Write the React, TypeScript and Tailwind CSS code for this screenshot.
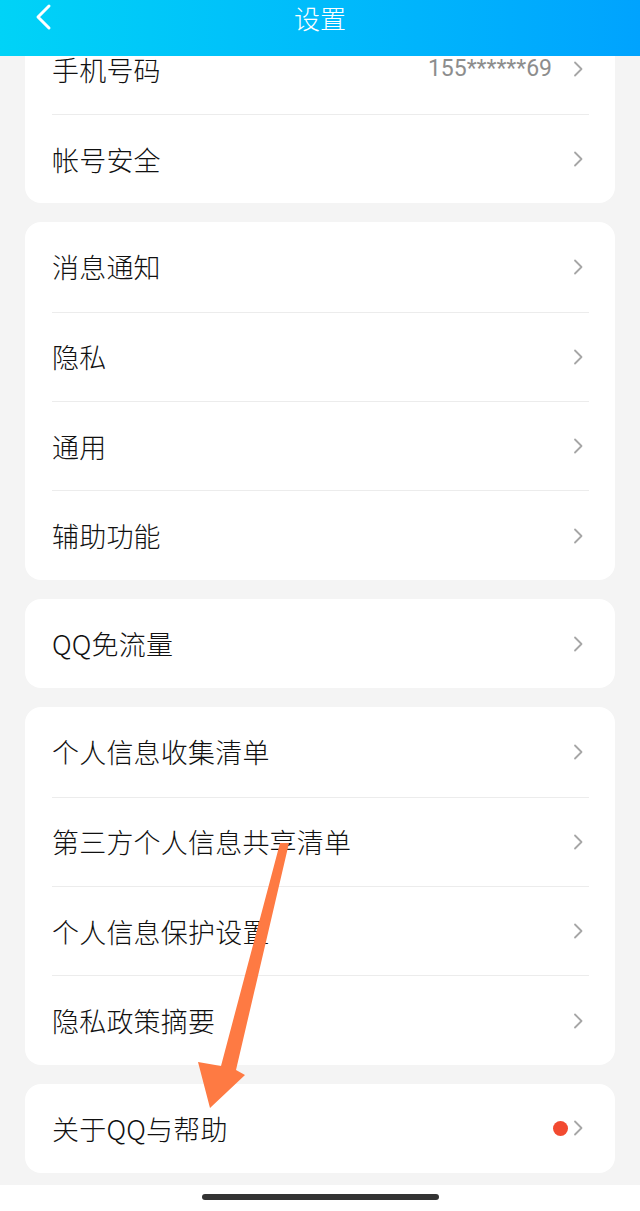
import React from "react";

type Row = { label: string; value?: string; dot?: boolean };

const groups: Row[][] = [
  [{ label: "手机号码", value: "155******69" }, { label: "帐号安全" }],
  [{ label: "消息通知" }, { label: "隐私" }, { label: "通用" }, { label: "辅助功能" }],
  [{ label: "QQ免流量" }],
  [
    { label: "个人信息收集清单" },
    { label: "第三方个人信息共享清单" },
    { label: "个人信息保护设置" },
    { label: "隐私政策摘要" },
  ],
  [{ label: "关于QQ与帮助", dot: true }],
];

const cjk = "font-['PingFang_SC','Noto_Sans_CJK_SC',sans-serif]";

function Chevron() {
  return (
    <svg width="11" height="16" viewBox="0 0 11 16" fill="none" className="shrink-0">
      <path d="M2 1.5 L8.5 8 L2 14.5" stroke="#a6a6a6" strokeWidth="1.8" strokeLinecap="round" strokeLinejoin="round" />
    </svg>
  );
}

function Card({ rows }: { rows: Row[] }) {
  return (
    <div className="mx-[25px] rounded-[16px] bg-white">
      {rows.map((r, i) => (
        <div key={r.label} className="h-[89.4px] pl-[27px]">
          <div
            className={[
              "mr-[26px] flex h-full items-center pr-[5px]",
              i > 0 ? "border-t border-[#ececec]" : "",
            ].join(" ")}
          >
            <span className={`${cjk} flex-1 text-[27px] font-light leading-none tracking-[0.2px] text-[#111111]`}>
              {r.label}
            </span>
            {r.value && (
              <span className="mr-[21px] font-['Roboto',sans-serif] text-[23px] text-[#8d8d8d]">{r.value}</span>
            )}
            {r.dot && <span className="mr-[5px] h-[15px] w-[15px] rounded-full bg-[#f24a30]" />}
            <Chevron />
          </div>
        </div>
      ))}
    </div>
  );
}

export default function App() {
  return (
    <div className="relative flex h-[1211px] w-[640px] flex-col overflow-hidden bg-[#f4f4f4]">
      <div className="relative z-10 flex h-[56px] shrink-0 items-start justify-center bg-linear-to-r from-[#00d3f7] to-[#00a3fe]">
        <svg width="20" height="30" viewBox="0 0 20 30" fill="none" className="absolute left-[34px] top-[3px]">
          <path d="M15 3 L4 14 L15 25" stroke="white" strokeWidth="3" strokeLinecap="round" strokeLinejoin="round" />
        </svg>
        <span className={`${cjk} mt-[1px] text-[26px] font-light leading-[34px] text-white`}>设置</span>
      </div>

      <div className="-mt-[31.5px] flex flex-col gap-[19px]">
        {groups.map((g, i) => (
          <Card key={i} rows={g} />
        ))}
      </div>

      <div className="mt-auto flex h-[26px] shrink-0 items-start justify-center bg-white">
        <div className="mt-[9px] h-[6px] w-[237px] rounded-full bg-[#333333]" />
      </div>

      {/* annotation arrow */}
      <svg width="640" height="1211" viewBox="0 0 640 1211" className="pointer-events-none absolute left-0 top-0 z-20">
        <polygon
          points="280,843 289,843 236,1070 245,1075 210,1108 198,1062 221,1066"
          fill="#fe7a43"
          strokeLinejoin="round"
        />
      </svg>
    </div>
  );
}
